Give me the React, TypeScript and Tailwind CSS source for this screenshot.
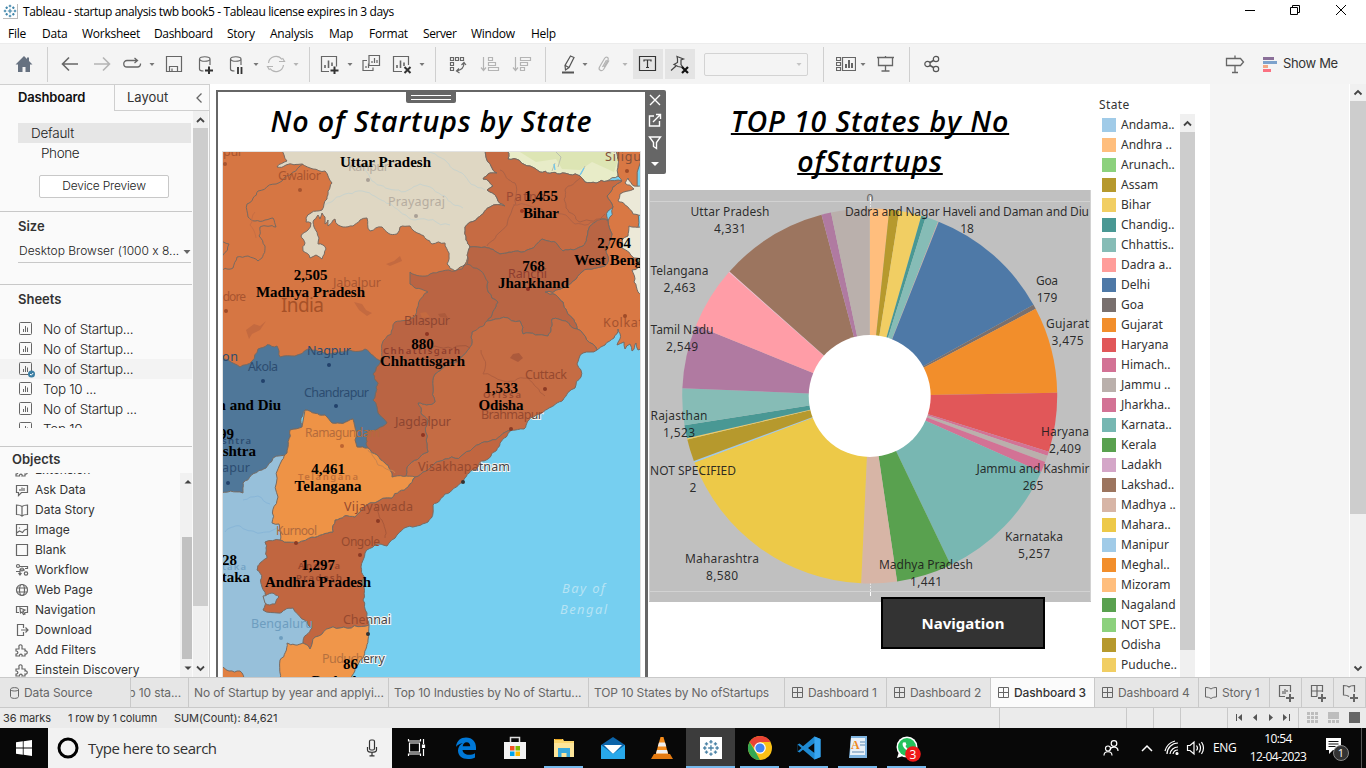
import React from "react";

type Pt = [number, number];
type Kids = { children?: React.ReactNode };

/* ---------- small helpers ---------- */

function Icon({ children, className = "", s = 20, c = "#666" }: Kids & { className?: string; s?: number; c?: string }) {
  return (
    <svg width={s} height={s} viewBox={`0 0 ${s} ${s}`} fill="none" stroke={c} strokeWidth={1.2} className={`shrink-0 ${className}`}>
      {children}
    </svg>
  );
}

const Caret = ({ className = "", c = "#777" }: { className?: string; c?: string }) => (
  <svg width="8" height="8" viewBox="0 0 8 8" className={`shrink-0 ${className}`}>
    <path d="M1.500 3h5L4 6z" fill={c} />
  </svg>
);

const Sep = ({ className = "" }: { className?: string }) => <div className={`h-[35px] w-px shrink-0 bg-[#cfcfcf] ${className}`} />;

/* Subdivides an edge with noise that depends only on its end points, so that neighbours share a border. */
function edge(a: Pt, b: Pt, depth: number): Pt[] {
  const len = Math.hypot(b[0] - a[0], b[1] - a[1]);
  if (depth === 0 || len < 4) return [b];
  const flip = a[0] + a[1] * 1.7 > b[0] + b[1] * 1.7 ? -1 : 1;
  const n = Math.sin((a[0] + b[0]) * 12.98 + (a[1] + b[1]) * 78.23) * 43758.5;
  const r = (n - Math.floor(n) - 0.5) * 0.3 * flip;
  const m: Pt = [(a[0] + b[0]) / 2 - (b[1] - a[1]) * r, (a[1] + b[1]) / 2 + (b[0] - a[0]) * r];
  return [...edge(a, m, depth - 1), ...edge(m, b, depth - 1)];
}

function rough(pts: Pt[], closed = true) {
  let out: Pt[] = [pts[0]];
  for (let i = 1; i < pts.length; i++) out = out.concat(edge(pts[i - 1], pts[i], 3));
  return "M" + out.map((p) => `${p[0].toFixed(1)} ${p[1].toFixed(1)}`).join("L") + (closed ? "Z" : "");
}

/* ---------- map data ---------- */

const UP: Pt[] = [[283, 148], [284, 155], [287, 161], [277, 167], [286, 165], [302, 164], [313, 169], [325, 171], [332, 183], [328, 191], [327, 199], [324, 204], [322, 210], [311, 213], [306, 218], [306, 222], [311, 223], [308, 230], [301, 236], [305, 243], [303, 251], [310, 258], [316, 255], [322, 259], [326, 249], [323, 245], [318, 244], [319, 238], [314, 227], [313, 222], [318, 215], [320, 219], [322, 213], [325, 217], [325, 224], [328, 220], [328, 226], [335, 219], [338, 225], [343, 227], [353, 226], [360, 220], [367, 218], [370, 231], [382, 227], [388, 233], [397, 234], [400, 227], [410, 226], [420, 234], [432, 244], [445, 243], [447, 264], [455, 271], [463, 266], [468, 256], [470, 247], [466, 240], [465, 227], [476, 220], [490, 207], [505, 206], [497, 198], [487, 190], [493, 186], [483, 179], [490, 173], [497, 173], [491, 166], [485, 148]];
const BIHAR: Pt[] = [[485, 148], [491, 166], [497, 173], [490, 173], [483, 179], [493, 186], [487, 190], [497, 198], [505, 206], [490, 207], [476, 220], [465, 227], [466, 240], [470, 247], [485, 247], [500, 254], [518, 251], [530, 249], [542, 239], [557, 244], [563, 251], [583, 246], [588, 231], [602, 219], [608, 221], [608, 211], [613, 207], [607, 196], [622, 181], [607, 181], [585, 182], [580, 176], [560, 174], [540, 172], [530, 166], [508, 159], [507, 148]];
const JHARKHAND: Pt[] = [[467, 264], [470, 247], [485, 247], [500, 254], [518, 251], [530, 249], [542, 239], [557, 244], [563, 251], [583, 246], [588, 231], [602, 219], [608, 221], [612, 234], [607, 264], [582, 272], [573, 281], [545, 292], [563, 302], [567, 312], [577, 329], [552, 319], [548, 336], [523, 334], [520, 321], [487, 321], [498, 302], [488, 292], [488, 282]];
const WB: Pt[] = [[615, 148], [618, 165], [618, 176], [622, 181], [607, 196], [613, 207], [608, 221], [612, 234], [607, 264], [582, 272], [573, 281], [545, 292], [563, 302], [567, 312], [577, 329], [597, 350], [605, 345], [614, 338], [618, 329], [620, 339], [617, 345], [624, 342], [625, 349], [630, 344], [632, 351], [636, 343], [638, 350], [645, 347], [645, 148]];
const CHHATTISGARH: Pt[] = [[410, 272], [430, 274], [455, 271], [467, 264], [488, 282], [488, 292], [498, 302], [487, 321], [472, 332], [467, 351], [445, 366], [435, 374], [433, 387], [435, 402], [418, 403], [428, 420], [428, 452], [407, 467], [405, 477], [392, 477], [385, 463], [368, 448], [368, 430], [387, 423], [373, 400], [378, 383], [373, 374], [381, 361], [382, 344], [395, 322], [415, 316], [428, 292], [410, 284]];
const ODISHA: Pt[] = [[487, 321], [520, 321], [523, 334], [548, 336], [552, 319], [577, 329], [597, 350], [583, 353], [577, 364], [581, 377], [575, 388], [563, 400], [549, 408], [535, 416], [524, 429], [511, 430], [490, 441], [470, 451], [445, 459], [435, 463], [415, 477], [405, 477], [407, 467], [428, 452], [428, 420], [418, 403], [435, 402], [433, 387], [435, 374], [445, 366], [467, 351], [472, 332]];
const ANDHRA: Pt[] = [[415, 477], [435, 463], [445, 459], [470, 451], [490, 441], [511, 430], [500, 443], [491, 456], [475, 470], [463, 482], [445, 494], [433, 505], [433, 513], [428, 522], [407, 527], [397, 535], [387, 546], [375, 545], [365, 553], [361, 567], [364, 587], [363, 600], [367, 613], [369, 625], [340, 628], [315, 637], [310, 649], [303, 643], [312, 628], [293, 608], [278, 613], [263, 610], [262, 587], [257, 570], [267, 558], [265, 542], [280, 540], [298, 543], [312, 537], [333, 532], [335, 520], [355, 517], [360, 512], [392, 498], [408, 487]];
const TELANGANA: Pt[] = [[305, 410], [325, 415], [332, 423], [353, 419], [357, 447], [368, 448], [385, 463], [392, 477], [415, 477], [408, 487], [392, 498], [360, 512], [355, 517], [335, 520], [333, 532], [312, 537], [298, 543], [280, 540], [279, 524], [272, 523], [278, 497], [282, 460], [287, 453], [290, 430], [302, 427]];
const MAHARASHTRA: Pt[] = [[218, 357], [228, 360], [240, 367], [252, 361], [258, 349], [277, 346], [280, 357], [308, 349], [340, 352], [365, 349], [381, 361], [373, 374], [378, 383], [373, 400], [387, 423], [368, 430], [368, 448], [357, 447], [353, 419], [332, 423], [325, 415], [305, 410], [302, 427], [290, 430], [287, 453], [273, 458], [262, 470], [243, 483], [243, 493], [218, 492]];
const KARNATAKA: Pt[] = [[218, 492], [243, 493], [243, 483], [262, 470], [273, 458], [287, 453], [282, 460], [278, 497], [272, 523], [279, 524], [280, 540], [320, 560], [320, 640], [290, 690], [218, 690]];
const TAMIL: Pt[] = [[286, 690], [280, 660], [287, 643], [303, 643], [310, 649], [315, 637], [340, 628], [369, 625], [368, 640], [363, 658], [355, 668], [352, 690]];
const LAND: Pt[] = [[218, 148], [500, 148], [500, 300], [420, 370], [218, 370]];
const NEPAL: Pt[] = [[507, 148], [508, 159], [530, 166], [540, 172], [560, 174], [580, 176], [585, 182], [607, 181], [618, 176], [618, 165], [615, 148]];
const BDESH1: Pt[] = [[645, 186], [634, 186], [628, 178], [625, 183], [634, 189], [620, 194], [618, 201], [625, 205], [633, 214], [645, 215]];
const BDESH2: Pt[] = [[645, 225], [629, 226], [628, 236], [622, 240], [622, 248], [634, 258], [645, 262], [645, 296], [638, 292], [634, 282], [632, 270], [645, 262]];

const REGIONS: [Pt[], string][] = [
  [LAND, "#d67643"], [KARNATAKA, "#97c0da"], [WB, "#d97844"], [NEPAL, "#e8ecc8"], [UP, "#dfd7c3"], [BIHAR, "#c66b43"], [JHARKHAND, "#b96544"], [ODISHA, "#c56c44"],
  [CHHATTISGARH, "#ba6443"], [MAHARASHTRA, "#4f7799"], [ANDHRA, "#c16640"], [TELANGANA, "#ee9346"], [TAMIL, "#f0964a"], [BDESH1, "#ece9d8"], [BDESH2, "#ece9d8"],
];

const TERRAIN: [Pt[], string][] = [
  [[[343, 160], [365, 168], [372, 181], [395, 190], [420, 184], [445, 196], [463, 208]], "#c9d3cd"],
  [[[325, 205], [345, 194], [372, 195], [392, 205], [415, 220], [450, 225]], "#c9d3cd"],
  [[[425, 150], [445, 160], [462, 173], [485, 190]], "#c9d3cd"],
  [[[500, 170], [515, 183], [512, 210], [500, 232], [487, 246]], "#aa6146"],
  [[[580, 178], [565, 190], [566, 208], [580, 222], [605, 214]], "#aa6146"],
  [[[513, 205], [545, 212], [575, 224], [600, 219]], "#b06347"],
  [[[412, 345], [435, 346], [470, 348]], "#a4573c"],
  [[[481, 350], [483, 374], [500, 380], [528, 378], [545, 396]], "#b05f40"],
  [[[368, 450], [378, 465], [395, 473]], "#ca8550"],
  [[[375, 505], [382, 520], [385, 538]], "#a8583a"],
  [[[225, 532], [240, 526], [255, 532], [277, 528]], "#88b6d8"],
  [[[243, 500], [258, 496], [270, 504]], "#88b6d8"],
  [[[255, 212], [250, 225], [256, 238]], "#c76e44"],
];

function CityLabel({ x, y, w, t, c, s = 12.5, ls }: { x: number; y: number; w: number; t: string; c: string; s?: number; ls?: boolean }) {
  return (
    <text x={x} y={y} textLength={w} fill={c} fontSize={s} fontFamily="'Noto Sans', sans-serif" fontWeight={ls ? 600 : 400} fontStyle={t === "Bay of" || t === "Bengal" ? "italic" : undefined}>
      {t}
    </text>
  );
}

const CITIES: [number, number, number, string, string, number?][] = [
  [223, 156, 20, "pur", "#a8542f"], [278, 180, 43, "Gwalior", "#a8542f"], [348, 171, 41, "Kanpur", "#b6ada0"], [388, 206, 57, "Prayagraj", "#b6ada0"],
  [333, 287, 48, "Jabalpur", "#aa5833"], [281, 312, 43, "India", "#a65128", 19], [213, 301, 33, "Indore", "#a8542f", 12], [506, 201, 39, "Patna", "#9a4a35"],
  [605, 161, 36, "Siligu", "#83503a"], [508, 278, 39, "Ranchi", "#8e3d30"], [603, 327, 40, "Kolkat", "#a4522f"], [404, 325, 46, "Bilaspur", "#8d4632"],
  [307, 355, 44, "Nagpur", "#2c4c70"], [248, 371, 30, "Akola", "#2c4c70"], [222, 361, 16, "on", "#2c4c70"], [525, 379, 42, "Cuttack", "#96492f"],
  [304, 397, 65, "Chandrapur", "#2c4c70"], [395, 426, 56, "Jagdalpur", "#8d4632"], [305, 437, 75, "Ramagundam", "#b46b3c", 12], [222, 472, 28, "apur", "#2c4c70"],
  [344, 511, 69, "Vijayawada", "#954a2f"], [276, 535, 41, "Kurnool", "#b06a3e", 12], [341, 546, 39, "Ongole", "#954a2f", 12], [251, 628, 62, "Bengaluru", "#6d9dbf"],
];

const DOTS: [number, number, string][] = [
  [225, 164, "#a8542f"], [300, 190, "#a8542f"], [368, 180, "#a9a096"], [416, 216, "#a9a096"], [226, 311, "#a04b28"], [522, 211, "#a33a20"], [627, 171, "#a04b28"],
  [528, 289, "#8e3022"], [625, 316, "#a04b28"], [427, 334, "#8e3522"], [329, 365, "#22426c"], [263, 381, "#22426c"], [545, 389, "#8c3a24"], [336, 406, "#22426c"],
  [423, 435, "#8e3522"], [342, 446, "#bd6431"], [228, 483, "#22426c"], [378, 521, "#8c3a24"], [296, 543, "#8c3a24"], [360, 555, "#8c3a24"], [281, 638, "#6d9dbf"],
  [368, 634, "#333"], [463, 482, "#333"], [511, 429, "#8c3a24"],
];

const STATES: [number, number, string, string, number][] = [
  [385.500, 167, "", "Uttar Pradesh", 91], [541, 218, "1,455", "Bihar", 36], [614, 265, "2,764", "West Bengal", 80], [310.500, 297, "2,505", "Madhya Pradesh", 109],
  [533.500, 288, "768", "Jharkhand", 71], [422.500, 366, "880", "Chhattisgarh", 85], [501, 410, "1,533", "Odisha", 45], [328, 491, "4,461", "Telangana", 67],
  [318, 587, "1,297", "Andhra Pradesh", 106],
];

const COAST_TOWNS: [number, number, number, string][] = [[418, 471, 92, "Visakhapatnam"], [481, 419, 62, "Brahmapur"], [343, 624, 48, "Chennai"], [322, 663, 63, "Puducherry"]];

function MapView() {
  const serif = "'Liberation Serif', serif";
  return (
    <svg width="417" height="525" viewBox="223 152 417 525" className="block">
      <rect x="218" y="148" width="430" height="540" fill="#76cff0" />
      <g stroke="#f4f4f4" strokeWidth="2" paintOrder="stroke" fill="#444" fontSize="12.5" fontFamily="'Noto Sans', sans-serif">
        {COAST_TOWNS.map(([x, y, w, t]) => <text key={t} x={x} y={y} textLength={w}>{t}</text>)}
      </g>
      {REGIONS.map(([p, f], i) => (
        <path key={i} d={rough(p)} fill={f} stroke={i < 2 ? "none" : "#776a62"} strokeWidth="1" strokeLinejoin="round" />
      ))}
      <path d="M520 152l16 10 20-3 6 10 18 1 12-8 22 10 4-12-6-8z" fill="#dde5b4" />
      <path d="M556 152l5 5-3 10M555 163l-3 8M585 166l-4 8" stroke="#b9bfae" fill="none" />
      <path d="M584 168l-4 7M554 164l1 6" stroke="#6fc8f0" strokeWidth="1.3" fill="none" />
      <path d={rough([[303, 164], [282, 181], [258, 191], [247, 204], [248, 217], [255, 221], [265, 220], [273, 218], [276, 227], [260, 227], [259, 236], [265, 246], [258, 261], [248, 256], [237, 257], [233, 268], [218, 272]], false)} fill="none" stroke="#776a62" />
      <path d={rough([[218, 243], [229, 244], [223, 255], [218, 262]], false)} fill="none" stroke="#776a62" />
      <path d={rough([[263, 596], [272, 593], [279, 597], [275, 604], [265, 603]])} fill="#97c0da" stroke="#776a62" />
      <path d={rough([[218, 667], [229, 671], [240, 671], [250, 690], [218, 690]])} fill="#e08042" stroke="#776a62" />
      {TERRAIN.map(([p, c], i) => (
        <path key={i} d={rough(p, false)} fill="none" stroke={c} />
      ))}
      <path d="M246 330l8-6 6 2 6-5-6 9-8 4-3 5-2-6zM386 264l8-3 6-5 2 5-12 5zM354 302l8 2 4 6 6 3-5 3-8-6zM420 313l6-1 4 5-8 1z" fill="#c46a40" />
      <path d="M513 354l6-1 4 5-5 4-8-4zM438 314l7-1 3 5-8-1z" fill="#ac5a3c" />
      {CITIES.map(([x, y, w, t, c, s], i) => (
        <CityLabel key={i} x={x} y={y} w={w} t={t} c={c} s={s} />
      ))}
      <clipPath id="onland">
        <path d={rough(ODISHA) + rough(ANDHRA) + rough(TAMIL)} />
      </clipPath>
      <g clipPath="url(#onland)" fill="#96492f" fontSize="12.5" fontFamily="'Noto Sans', sans-serif">
        {COAST_TOWNS.map(([x, y, w, t]) => <text key={t} x={x} y={y} textLength={w} fill={t === "Puducherry" ? "#b5713f" : undefined}>{t}</text>)}
      </g>
      <CityLabel ls x={383} y={354} w={77} t="Chhattisgarh" c="#8f3f2f" s={9.5} />
      <CityLabel ls x={483} y={398} w={38} t="Orissa" c="#9b4a31" s={9.5} />
      <CityLabel ls x={298} y={480} w={60} t="Telangana" c="#c3713a" s={9.5} />
      <CityLabel ls x={298} y={569} w={42} t="Andhra" c="#94452c" s={9.5} />
      <CityLabel ls x={296} y={581} w={46} t="Pradesh" c="#94452c" s={9.5} />
      <CityLabel ls x={222} y={444} w={29} t="shtra" c="#2c4c70" s={9.5} />
      <CityLabel ls x={222} y={570} w={24} t="taka" c="#73a3c5" s={9.5} />
      <CityLabel x={562} y={593} w={43} t="Bay of" c="#b5e3f4" s={13} />
      <CityLabel x={560} y={614} w={47} t="Bengal" c="#b5e3f4" s={13} />
      {DOTS.map(([x, y, c], i) => (
        <circle key={i} cx={x} cy={y} r="2" fill={c} />
      ))}
      <g fontFamily={serif} fontWeight="700" fontSize="15" textAnchor="middle" fill="#000">
        {STATES.map(([x, y, n, name, w]) => (
          <g key={name}>
            {n && <text x={x} y={y - 17}>{n}</text>}
            <text x={x} y={y} textLength={w}>{name}</text>
          </g>
        ))}
        <text x="350.500" y="669">86</text>
        <text x="350" y="686">Puducherry</text>
      </g>
      <g fontFamily={serif} fontWeight="700" fontSize="15" textAnchor="end" fill="#000">
        <text x="281" y="410">Daman and Diu</text>
        <text x="234" y="439">4,799</text>
        <text x="256" y="456">Maharashtra</text>
        <text x="237" y="565">4,228</text>
        <text x="250" y="582">Karnataka</text>
      </g>
    </svg>
  );
}

/* ---------- pie ---------- */

const SLICES: [number, string][] = [
  [6, "#ffbe7d"], [9.1, "#b6992d"], [16, "#f1ce63"], [17.4, "#499894"], [21.4, "#86bcb6"], [21.6, "#d9a9a2"], [60.9, "#4e79a7"], [62.3, "#79706e"], [89, "#f28e2b"],
  [107.3, "#e15759"], [108.6, "#d37295"], [110.6, "#bab0ac"], [113.9, "#d37295"], [154.4, "#78b7b2"], [171.6, "#59a14f"], [182.6, "#d7b5a6"], [249.2, "#edc948"],
  [249.7, "#a0cbe8"], [256.6, "#b6992d"], [257, "#f1ce63"], [261, "#499894"], [272.4, "#86bcb6"], [292.1, "#b07aa1"], [311.3, "#ff9da7"], [311.6, "#fabfd2"],
  [345.1, "#9c755f"], [348.1, "#b07aa1"], [360, "#bab0ac"],
];

const PIE_LABELS: [number, number, number, string, string][] = [
  [730, 216, 79, "Uttar Pradesh", "4,331"], [967, 216, 244, "Dadra and Nagar Haveli and Daman and Diu", "18"], [679.5, 275, 58, "Telangana", "2,463"],
  [682, 334, 63, "Tamil Nadu", "2,549"], [1047, 285, 22, "Goa", "179"], [1067.5, 328, 43, "Gujarat", "3,475"], [679, 420, 57, "Rajasthan", "1,523"],
  [1065, 436, 48, "Haryana", "2,409"], [693, 475, 86, "NOT SPECIFIED", "2"], [1033, 473, 113, "Jammu and Kashmir", "265"], [722, 563, 74, "Maharashtra", "8,580"],
  [926, 569, 94, "Madhya Pradesh", "1,441"], [1034, 541, 58, "Karnataka", "5,257"],
];

function Pie() {
  const cx = 869.7, cy = 396, R = 187.5;
  const at = (d: number) => `${(cx + R * Math.sin((d * Math.PI) / 180)).toFixed(2)} ${(cy - R * Math.cos((d * Math.PI) / 180)).toFixed(2)}`;
  return (
    <svg width="442" height="412" viewBox="649 190 442 412" className="block">
      <rect x="649" y="190" width="442" height="412" fill="#c0c0c0" />
      <path d="M649.5 190v411M1090.5 190v411M649 201.5h442M649 591.5h442" stroke="#d2d2d2" fill="none" />
      <text x="870" y="203" textAnchor="middle" fontSize="12" fill="#666" fontFamily="'Noto Sans', sans-serif">0</text>
      <rect x="860" y="201" width="20" height="7" fill="#c0c0c0" />
      <path d="M860 201.5h20" stroke="#d2d2d2" />
      <path d="M870.5 197v4M870.5 592v4" stroke="#fff" />
      <path d="M870.5 202v8M870.5 583v8" stroke="#e4e4e4" strokeDasharray="2 1" />
      {SLICES.map(([end, f], i) => {
        const start = i ? SLICES[i - 1][0] : 0;
        return <path key={i} d={`M${cx} ${cy}L${at(start)}A${R} ${R} 0 0 1 ${at(end)}Z`} fill={f} />;
      })}
      <circle cx={cx} cy={cy} r="61" fill="#fff" />
      <g fontFamily="'Noto Sans', sans-serif" fontSize="12" textAnchor="middle" fill="#1c1c1c" fillOpacity="0.92">
        {PIE_LABELS.map(([x, y, w, name, n]) => (
          <g key={name}>
            <text x={x} y={y} textLength={w}>{name}</text>
            <text x={x} y={y + 17} textLength={n.length === 5 ? 32 : undefined}>{n}</text>
          </g>
        ))}
      </g>
    </svg>
  );
}

const LEGEND: [string, string][] = [
  ["#a0cbe8", "Andama.."], ["#ffbe7d", "Andhra .."], ["#8cd17d", "Arunach.."], ["#b6992d", "Assam"], ["#f1ce63", "Bihar"], ["#499894", "Chandig.."], ["#86bcb6", "Chhattis.."],
  ["#ff9d9a", "Dadra a.."], ["#4e79a7", "Delhi"], ["#79706e", "Goa"], ["#f28e2b", "Gujarat"], ["#e15759", "Haryana"], ["#d37295", "Himach.."], ["#bab0ac", "Jammu .."],
  ["#d37295", "Jharkha.."], ["#76b7b2", "Karnata.."], ["#59a14f", "Kerala"], ["#d4a6c8", "Ladakh"], ["#9c755f", "Lakshad.."], ["#d7b5a6", "Madhya .."], ["#edc948", "Mahara.."],
  ["#a0cbe8", "Manipur"], ["#f28e2b", "Meghal.."], ["#ffbe7d", "Mizoram"], ["#59a14f", "Nagaland"], ["#8cd17d", "NOT SPE.."], ["#b6992d", "Odisha"], ["#f1ce63", "Puduche.."],
];

/* ---------- chrome ---------- */

const SEGOE = "font-['Open_Sans',sans-serif]";

function TableauMark({ s = 16 }: { s?: number }) {
  return (
    <svg width={s} height={s} viewBox="0 0 16 16" fill="none" stroke="#3c83a8" strokeWidth="1.3" className="shrink-0">
      <path d="M8 5.5v5M5.5 8h5M8 .8v3M6.5 2.3h3M8 12.200v3M6.500 13.700h3M.8 8h3M2.300 6.500v3M12.200 8h3M13.700 6.500v3M4.200 2.800v3M2.700 4.300h3M11.800 2.800v3M10.300 4.300h3M4.200 10.200v3M2.700 11.700h3M11.800 10.200v3M10.300 11.700h3" />
    </svg>
  );
}

function TitleBar() {
  return (
    <div className="flex h-[23px] items-center bg-white">
      <div className="ml-[3px] flex h-[15px] w-[15px] items-center justify-center border-r border-b border-[#bbb]"><TableauMark s={14} /></div>
      <span className={`ml-[5px] grow pt-px text-[12px] tracking-[-0.36px] whitespace-nowrap text-black ${SEGOE}`}>Tableau - startup analysis twb book5 - Tableau license expires in 3 days</span>
      <svg width="110" height="16" viewBox="0 0 110 16" fill="none" stroke="#000" strokeWidth="1" className="mr-[16px] mb-[3px]">
        <path d="M5 8.500h10M50.500 5.500h7v7h-7zM52.500 5.500v-2h7v7h-2M96 3l10 10M106 3L96 13" />
      </svg>
    </div>
  );
}

function MenuBar() {
  return (
    <div className={`flex h-[20px] items-center bg-white pt-[2px] pl-[8px] text-[12px] tracking-[-0.25px] text-black ${SEGOE}`}>
      <span className="w-[34px]">File</span>
      <span className="w-[40px]">Data</span>
      <span className="w-[72px]">Worksheet</span>
      <span className="w-[73px] tracking-[-0.35px]">Dashboard</span>
      <span className="w-[43px]">Story</span>
      <span className="w-[59px]">Analysis</span>
      <span className="w-[40px]">Map</span>
      <span className="w-[54px]">Format</span>
      <span className="w-[48px] tracking-[-0.4px]">Server</span>
      <span className="w-[60px]">Window</span>
      <span>Help</span>
    </div>
  );
}

function Toolbar() {
  const g = "#b4b4b4";
  return (
    <div className="flex h-[41px] items-center border-t border-[#ececec] bg-[#f4f4f4]">
      <Icon className="ml-[14px]" c="none"><path d="M10 2L1.500 10.500H4V18h4.500v-5h3v5H16v-7.500h2.500L15 7V3.500h-2V5z" fill="#667180" /></Icon>
      <Sep className="ml-[13px]" />
      <Icon className="ml-[12px]"><path d="M18 10H3M9 3.500L2.500 10 9 16.500" strokeWidth="1.6" /></Icon>
      <Icon className="ml-[12px]" c={g}><path d="M2 10h15M11 3.500l6.500 6.500-6.500 6.500" strokeWidth="1.6" /></Icon>
      <Icon className="ml-[10px]"><path d="M15 6.500H5a3 3 0 0 0 0 6.500h10.500a3 3 0 0 0 3-3.500M12.500 4l3 2.500-3 2.500" strokeWidth="1.300" /></Icon>
      <Caret className="ml-[6px]" />
      <Icon className="ml-[8px]"><path d="M2.500 2.500h15v15h-15zM5.500 17.500v-5h8v5M8 14.500v3" /></Icon>
      <Icon className="ml-[12px]"><path d="M3.500 5v10c0 1 1 2 4 2M14 5v6M3.500 5c0-3 10.500-3 10.500 0s-10.500 3-10.500 0" /><path d="M13 12.500v8M9 16.500h8" stroke="#333" strokeWidth="2" /></Icon>
      <Icon className="ml-[10px]"><path d="M4.500 5v10c0 1 1 2 4 2M15 5v6M4.500 5c0-3 10.500-3 10.500 0s-10.500 3-10.500 0" /><path d="M12 13v7M15.500 13v7" stroke="#333" strokeWidth="1.800" /></Icon>
      <Caret className="ml-[6px]" />
      <Icon className="ml-[6px]" c={g}><path d="M2.500 9A7.500 7.500 0 0 1 16 5.500M17.500 11A7.500 7.500 0 0 1 4 14.500M13 7.500h5.500L16.500 4M7 12.500H1.500L3.500 16" /></Icon>
      <Caret className="ml-[6px]" c={g} />
      <Sep className="ml-[9px]" />
      <Icon className="ml-[10px]"><path d="M9 17.500H1.500v-15h15v10" /><path d="M5 14v-3M8.500 14V6.500M12 12V8.500" strokeWidth="1.600" /><path d="M14.500 12.500v8M10.500 16.500h8" stroke="#333" strokeWidth="2" /></Icon>
      <Caret className="ml-[6px]" />
      <Icon className="ml-[7px]"><path d="M8 1.500h10.500v10H8zM6 6.500H2v10h10v-3M11 9V7M13.500 9V4M16 9V6M5 14v-2M7.500 14V9.500" /></Icon>
      <Icon className="ml-[11px]"><path d="M10 17.500H1.500v-15h15V11" /><path d="M5 14v-3M8.500 14V6.500M12 12V8.500" strokeWidth="1.600" /><path d="M12.500 13l6 6M18.500 13l-6 6" stroke="#333" strokeWidth="2" /></Icon>
      <Caret className="ml-[6px]" />
      <Sep className="ml-[9px]" />
      <Icon className="ml-[11px]"><path d="M3.500 3.500h3v3h-3zM8.500 3.500h3v3h-3zM13.500 3.500h3v3h-3zM3.500 8.500h3v3h-3zM3.500 13.500h3v3h-3zM17 9c0 4-3 7-7 8M14.500 11L17 8.500 19 11M12 14.500L9.500 17l3 2" /></Icon>
      <Icon className="ml-[13px]" c={g}><path d="M3.500 3v13M1 13.500l2.500 3 2.500-3M8.500 3.500h4v3h-4zM8.500 8.500h7v3h-7zM8.500 13.500h10v3h-10z" /></Icon>
      <Icon className="ml-[12px]" c={g}><path d="M3.500 3v13M1 13.500l2.500 3 2.500-3M8.500 3.500h10v3h-10zM8.500 8.500h7v3h-7zM8.500 13.500h4v3h-4z" /></Icon>
      <Sep className="ml-[13px]" />
      <Icon className="ml-[12px]" c="#555"><path d="M12.500 2l3.500 1.500-5 10-3.500 2.500-.5-4.500zM7.300 11.500l3.500 2" /><path d="M4 18.500h12" strokeWidth="2" /></Icon>
      <Caret className="ml-[3px]" />
      <Icon className="ml-[6px]" c={g}><path d="M9 13l4-7c1-3-2-4-3.500-1.500l-5 8.500c-1.500 3 2 5 4 2.500L14 6.500M7.500 13l4-7" /></Icon>
      <Caret className="ml-[6px]" c={g} />
      <div className="ml-[4px] flex h-[30px] w-[30px] items-center justify-center bg-[#e4e4e4]">
        <Icon c="#333"><path d="M1.500 2.500h16v14h-16zM6 7.500V6h7v1.500M9.500 6v7.500M8 13.500h3" /></Icon>
      </div>
      <div className="ml-[2px] flex h-[30px] w-[30px] items-center justify-center bg-[#e4e4e4]">
        <Icon c="#444"><path d="M7 2.500l6.500 2.500-2.500 1v4.500l2 3-5-1-4-2L7.500 8.500V5zM6 12l-5 4.500" /><path d="M12 13l6 6M18 13l-6 6" stroke="#111" strokeWidth="2.200" /></Icon>
      </div>
      <div className="ml-[9px] flex h-[23px] w-[104px] items-center justify-end rounded-[2px] border border-[#d3d3d3] pr-[4px]"><Caret c="#c4c4c4" /></div>
      <Sep className="ml-[15px]" />
      <Icon className="ml-[12px]"><path d="M.5 3.500h4v3h-4zM.5 8.500h4v3h-4zM.5 13.500h4v3h-4zM6.500 3.500h13v13h-13z" /><path d="M10 14v-4M13 14V6M16 14V9" strokeWidth="2" /></Icon>
      <Caret className="ml-[3px]" />
      <Icon className="ml-[8px]"><path d="M2 3.500h17M3.500 3.500v8h14v-8M10.500 11.500v5M6.500 17h8M10.500 2v1.500" strokeWidth="1.300" /></Icon>
      <Sep className="ml-[14px]" />
      <Icon className="ml-[12px]" c="#555"><circle cx="5.500" cy="10" r="2.700" /><circle cx="14" cy="5" r="2.700" /><circle cx="14" cy="15" r="2.700" /><path d="M8 8.500l3.500-2M8 11.500l3.500 2" strokeWidth="1.500" /></Icon>
      <Icon className="ml-[283px]"><path d="M1.500 4.500h14l3 3.500-3 3.500h-14zM10 1.500v3M10 11.500V18M7 18.500h6" strokeWidth="1.300" /></Icon>
      <svg width="14" height="16" viewBox="0 0 14 16" className="ml-[18px] shrink-0">
        <path d="M0 1h11v3H0z" fill="#8a6f98" /><path d="M0 5h14v3H0z" fill="#7ca2cc" /><path d="M0 9h5v3H0z" fill="#f4a884" /><path d="M0 13h8v3H0z" fill="#fb7181" />
      </svg>
      <span className="ml-[6px] font-['Inter',sans-serif] text-[13px] tracking-[-0.35px] text-[#333]">Show Me</span>
    </div>
  );
}

function SheetRow({ t, active, clip }: { t: string; active?: boolean; clip?: boolean }) {
  return (
    <div className={`flex shrink-0 pl-[18px] ${clip ? "h-[9px] overflow-hidden" : "h-5"} ${active ? "bg-[#f3f3f3]" : ""}`}>
      <div className="mt-[3px] h-[14px] w-[16px] shrink-0">
        <svg width="17" height="18" viewBox="0 0 17 18" fill="none" stroke="#666" className="overflow-visible">
          <rect x="1.500" y=".5" width="12" height="12" rx="1" />
          <path d="M5.500 10V7M7.500 10V4M9.500 10V5.500" />
          {active && (<><circle cx="13.500" cy="12" r="3.500" fill="#3b7ea3" stroke="none" /><path d="M12 12l1.200 1.200L15.200 11" stroke="#fff" /></>)}
        </svg>
      </div>
      <span className="ml-[9px] text-[13.5px] leading-5 font-light tracking-[-0.3px] whitespace-nowrap text-[#222]">{t}</span>
    </div>
  );
}

const puzzle = <path d="M1 6h3V4c-1-3 4-3 3 0v2h3v2c3-1 3 4 0 3v2H7c1-2.500-3-2.500-2.500 0H1v-2c2.500 0 2.500-3 0-3z" />;
const OBJECTS: [string, React.ReactNode][] = [
  ["Extension", puzzle],
  ["Ask Data", <path d="M1.500 2.500h11v7h-6l-3 3v-3h-2zM5 8V6M7 8V4.500M9 8V5" />],
  ["Data Story", <path d="M7 3.500C5 2 3 2 1.500 2v9.500c2 0 4 0 5.500 1.500 1.500-1.500 3.500-1.500 5.500-1.500V2C11 2 9 2 7 3.500zM7 3.500V13" />],
  ["Image", <path d="M1.500 1.500h11v11h-11zM1.500 10l3-2 3 1.500 2-2.500 3-1M4.500 4.500v1" />],
  ["Blank", <path d="M1.500 1.500h11v11h-11z" />],
  ["Workflow", <><circle cx="3" cy="3" r="1.500" /><path d="M5 3.500h7.500v2H10M4 7h6M1 8.500h4v3M3.500 10l1.500 2 1.500-2" /><circle cx="7" cy="6.500" r="1.500" /><circle cx="11" cy="10.500" r="1.700" /></>],
  ["Web Page", <><circle cx="7" cy="7" r="5.500" /><ellipse cx="7" cy="7" rx="2.500" ry="5.500" /><path d="M1.500 5h11M1.500 9h11" /></>],
  ["Navigation", <path d="M4 9.500H1.500v-6h11v6H10M5 5l5 2-2 1 2 3-1.500.5L7 9l-1.500 1z" />],
  ["Download", <path d="M8.500 5V1.500h-6v11h6V9M6 7h7M10.500 4.500L13 7l-2.500 2.500" />],
  ["Add Filters", puzzle],
  ["Einstein Discovery", puzzle],
];

function SidePanel() {
  return (
    <aside className="flex w-[210px] shrink-0 flex-col border-t border-r border-[#cfcfcf] bg-[#fafafa] font-['Inter',sans-serif] [font-feature-settings:'calt'_0]">
      <div className="flex h-[26px] shrink-0">
        <div className="flex w-[114px] items-center pl-[18px] text-[13px] font-semibold tracking-[-0.15px] text-[#111]">Dashboard</div>
        <div className="flex grow items-center border-b border-l border-[#cfcfcf] pl-[12px] text-[13px] text-[#333]">
          Layout
          <svg width="8" height="12" viewBox="0 0 8 12" className="ml-auto mr-[6px]" fill="none" stroke="#666" strokeWidth="1.300"><path d="M6.500 1.500L2 6l4.500 4.500" /></svg>
        </div>
      </div>
      <div className="flex min-h-0 grow">
        <div className="flex w-[192px] flex-col">
          <div className="mt-[12px] ml-[18px] h-5 w-[173px] shrink-0 bg-[#e6e6e6] pl-[13px] text-[13.5px] leading-5 font-light tracking-[-0.25px] text-[#222]">Default</div>
          <div className="ml-[41px] h-5 shrink-0 text-[13.5px] leading-5 font-light tracking-[-0.4px] text-[#222]">Phone</div>
          <div className="mt-[12px] ml-[39px] flex h-[23px] w-[130px] shrink-0 items-center justify-center rounded-[2px] border border-[#c8c8c8] bg-white pb-px text-[12px] font-light tracking-[-0.2px] text-[#222]">Device Preview</div>
          <div className="mt-[13px] h-px shrink-0 bg-[#c8c8c8]" />
          <div className="mt-[4px] ml-[18px] h-5 shrink-0 text-[13px] leading-5 font-semibold text-[#333]">Size</div>
          <div className="mt-[5px] ml-[18px] flex h-[22px] w-[173px] shrink-0 items-center border-b border-[#c8c8c8] pl-px text-[12px] font-light tracking-[0px] whitespace-nowrap text-[#222]">
            <span className="grow pb-px">Desktop Browser (1000 x 8...</span>
            <svg width="8" height="6" viewBox="0 0 8 6"><path d="M.5 1h7L4 5z" fill="#666" /></svg>
          </div>
          <div className="mt-[21px] h-px shrink-0 bg-[#c8c8c8]" />
          <div className="mt-[4px] ml-[18px] h-5 shrink-0 text-[13px] leading-5 font-semibold text-[#333]">Sheets</div>
          <div className="mt-[10px] flex shrink-0 flex-col">
            <SheetRow t="No of Startup..." />
            <SheetRow t="No of Startup..." />
            <SheetRow t="No of Startup..." active />
            <SheetRow t="Top 10 ..." />
            <SheetRow t="No of Startup ..." />
            <SheetRow t="Top 10" clip />
          </div>
          <div className="mt-[18px] h-px shrink-0 bg-[#c8c8c8]" />
          <div className="mt-[2px] ml-[12px] h-5 shrink-0 text-[13px] leading-5 font-semibold text-[#333]">Objects</div>
          <div className="mt-[4px] flex min-h-0 grow overflow-hidden">
            <div className="mt-[-13px] flex grow flex-col">
              {OBJECTS.map(([t, icon]) => (
                <div key={t} className="flex h-5 shrink-0 items-center pl-[15px] text-[12px] whitespace-nowrap text-[#333]">
                  <Icon s={14} className="mr-[6px]">{icon}</Icon>
                  {t}
                </div>
              ))}
            </div>
            <div className="flex w-[12px] flex-col items-center justify-between bg-[#f1f1f1] pt-[6px] pb-[6px]">
              <svg width="8" height="5" viewBox="0 0 8 5" className="ml-[4px]"><path d="M.5 4.500L4 1l3.500 3.500z" fill="#444" /></svg>
              <div className="mt-[53px] mb-[7px] ml-[2px] w-[10px] grow bg-[#c1c1c1]" />
              <svg width="8" height="5" viewBox="0 0 8 5" className="ml-[4px]"><path d="M.5.500h7L4 4z" fill="#444" /></svg>
            </div>
          </div>
        </div>
        <div className="ml-px flex w-[15px] flex-col items-center bg-[#f0f0f0]">
          <svg width="15" height="17" viewBox="0 0 15 17" fill="none" stroke="#444" strokeWidth="1.800"><path d="M4 11l3.500-3.500L11 11" /></svg>
          <div className="h-[478px] w-full bg-[#cdcdcd]" />
          <svg width="15" height="17" viewBox="0 0 15 17" fill="none" stroke="#444" strokeWidth="1.800" className="mt-auto"><path d="M4 6.500L7.500 10 11 6.500" /></svg>
        </div>
      </div>
    </aside>
  );
}

function Dashboard() {
  const title = "font-['Open_Sans',sans-serif] text-[28.5px] font-semibold italic leading-[40px] tracking-[0.9px] text-black";
  return (
    <main className="relative flex w-[1000px] shrink-0 overflow-hidden bg-white">
      <section className="relative mt-[6px] ml-[6px] flex w-[432px] shrink-0 flex-col border-t-2 border-r-[3px] border-l-2 border-[#666]">
        <h2 className={`mt-[9px] text-center whitespace-nowrap ${title}`}>No of Startups by State</h2>
        <div className="mt-[10px] ml-[4px] h-[526px] w-[419px] border-t border-r border-l border-[#e2e2e2]"><MapView /></div>
        <div className="absolute top-[-1px] left-[188px] flex h-[12px] w-[50px] flex-col items-center justify-center gap-[3px] rounded-b-[2px] bg-[#666]">
          <div className="h-px w-[40px] bg-white" />
          <div className="h-px w-[40px] bg-white" />
        </div>
      </section>
      <section className="mt-[17px] ml-px flex w-[442px] shrink-0 flex-col">
        <h2 className={`px-[50px] text-center whitespace-nowrap underline decoration-2 underline-offset-[1px] [text-decoration-skip-ink:none] ${title}`}>TOP 10 States by No<br />ofStartups</h2>
        <div className="mt-[9px]"><Pie /></div>
      </section>
      <section className="mt-[12px] ml-[8px] flex w-[97px] shrink-0 flex-col font-['Noto_Sans',sans-serif] text-[12px] text-[#333]">
        <div className="h-[18px] leading-[18px] tracking-[0.4px]">State</div>
        <div className="flex h-[563px]">
          <div className="flex w-[81px] flex-col overflow-hidden pt-px">
            {LEGEND.map(([c, t]) => (
              <div key={t} className="flex h-5 shrink-0 items-center">
                <div className="ml-[3px] h-[14px] w-[14px] shrink-0" style={{ backgroundColor: c }} />
                <span className="ml-[5px] whitespace-nowrap">{t}</span>
              </div>
            ))}
          </div>
          <div className="flex w-[15px] flex-col bg-[#f0f0f0]">
            <svg width="15" height="18" viewBox="0 0 15 18" fill="none" stroke="#444" strokeWidth="1.800"><path d="M4 11.500L7.500 8l3.500 3.500" /></svg>
            <div className="h-[518px] bg-[#cdcdcd]" />
          </div>
        </div>
      </section>
      <div className="absolute top-[6px] left-[435px] flex h-[84px] w-[21px] flex-col rounded-r-[2px] bg-[#666]">
        <svg width="20" height="84" viewBox="0 0 20 84" fill="none" stroke="#fff" strokeWidth="1.400">
          <path d="M5 5l10 10M15 5L5 15M9 26H4.500v10h10V31M8 32l7-7M11 24.500h4.500V29M4.500 47h11l-4 5.500v6l-3-2v-4z" />
          <path d="M6 72h8l-4 4z" fill="#fff" stroke="none" />
        </svg>
      </div>
      <button className="absolute top-[513px] left-[671px] flex h-[52px] w-[164px] items-center justify-center border-2 border-black bg-[#333] font-['Noto_Sans',sans-serif] text-[15px] font-bold text-white">Navigation</button>
    </main>
  );
}

const Grid = () => <svg width="11" height="11" viewBox="0 0 11 11" fill="none" stroke="#666" className="mr-[5px] shrink-0"><path d="M.5.500h10v10H.5zM5.500.500v10M.5 5.500h10" /></svg>;
const Book = () => <svg width="12" height="12" viewBox="0 0 12 12" fill="none" stroke="#666" className="mr-[5px] shrink-0"><path d="M6 2C4.500.800 2.500.500.500.500v9.500c2 0 4 .3 5.500 1.500 1.500-1.200 3.500-1.500 5.500-1.500V.500C9.500.500 7.500.800 6 2z" /></svg>;

function Tab({ w, children, on }: Kids & { w: string; on?: boolean }) {
  return <div className={`flex shrink-0 items-center overflow-hidden border-r border-[#c9c9c9] pl-[5px] whitespace-nowrap ${w} ${on ? "bg-[#fbfbfb] font-medium text-[#333]" : ""}`}>{children}</div>;
}

function SheetTabs() {
  return (
    <div className="flex h-[31px] border-t border-b border-[#c9c9c9] bg-[#e6e6e6] font-['Inter',sans-serif] text-[12px] tracking-[-0.12px] text-[#666]">
      <Tab w="w-[131px]">
        <svg width="9" height="12" viewBox="0 0 9 12" fill="none" stroke="#666" className="mr-[5px] ml-[5px]"><path d="M.5 2.500c0-2.500 8-2.500 8 0v7c0 2.500-8 2.500-8 0zM.5 2.500c0 2 8 2 8 0" /></svg>Data Source
      </Tab>
      <div className="flex w-[58px] items-center justify-end overflow-hidden border-r border-[#c9c9c9] pr-[7px] whitespace-nowrap">Top 10 sta...</div>
      <Tab w="w-[200px]">No of Startup by year and applyi...</Tab>
      <Tab w="w-[200px]">Top 10 Industies by No of Startu...</Tab>
      <Tab w="w-[196px]">TOP 10 States by No ofStartups</Tab>
      <Tab w="w-[102px]"><span className="w-[2px]" /><Grid />Dashboard 1</Tab>
      <Tab w="w-[104px]"><span className="w-[2px]" /><Grid />Dashboard 2</Tab>
      <Tab w="w-[104px]" on><span className="w-[2px]" /><Grid />Dashboard 3</Tab>
      <Tab w="w-[104px]"><span className="w-[2px]" /><Grid />Dashboard 4</Tab>
      <Tab w="w-[71px]"><span className="w-[1px]" /><Book />Story 1</Tab>
      <Tab w="w-[32px]"><Icon s={20}><path d="M10 13.500H4.500v-11h11V9M8 11V8M10 11V6M12 9V7" /><path d="M15 11v8M11 15h8" strokeWidth="2" /></Icon></Tab>
      <Tab w="w-[32px]"><Icon s={20}><path d="M10 13.500H4.500v-11h11V9M10 2.500v11M4.500 8h11" /><path d="M15 11v8M11 15h8" strokeWidth="2" /></Icon></Tab>
      <Tab w="w-[32px]"><Icon s={20}><path d="M10 13.500C8 12 6 12 4.500 12V2.500c2 0 4 0 5.500 1.500 1.500-1.500 3.500-1.500 5.500-1.500V9" /><path d="M15 11v8M11 15h8" strokeWidth="2" /></Icon></Tab>
    </div>
  );
}

function StatusBar() {
  return (
    <div className="flex h-[20px] items-center bg-[#ebebeb] font-['Inter',sans-serif] text-[11px] text-[#333]">
      <span className="ml-[3px] w-[65px] tracking-[-0.1px]">36 marks</span>
      <span className="w-[106px] tracking-[-0.15px]">1 row by 1 column</span>
      <span className="grow tracking-[-0.1px]">SUM(Count): 84,621</span>
      <svg width="367" height="20" viewBox="999 708 367 20">
        <path d="M999.500 708v20M1126.500 708v20M1153.500 708v20M1180.500 708v20M1227.500 708v20M1298.500 708v20" stroke="#c9c9c9" />
        <path d="M1242 714v7l-4-3.500zM1236 714h1v7h-1zM1257 714v7l-4-3.500zM1269 714v7l4-3.500zM1283 714v7l4-3.500zM1289 714h1v7h-1z" fill="#555" />
        <path d="M1307 712h3v3h-3zM1311 712h3v3h-3zM1315 712h3v3h-3zM1307 716h3v3h-3zM1311 716h3v3h-3zM1315 716h3v3h-3zM1307 720h3v3h-3zM1311 720h3v3h-3zM1315 720h3v3h-3zM1328 712h11v7h-11zM1328 720h3v3h-3zM1332 720h3v3h-3zM1336 720h3v3h-3z" fill="#bdbdbd" />
        <path d="M1349 712h11v11h-11z" fill="#666" />
      </svg>
    </div>
  );
}

function TaskItem({ children, line, on }: Kids & { line?: boolean; on?: boolean }) {
  return (
    <div className={`flex h-full w-[49px] shrink-0 flex-col items-center ${on ? "bg-[#3c3c3c]" : ""}`}>
      <div className="flex h-[38px] items-center justify-center pt-px"><svg width="28" height="28" viewBox="0 0 28 28">{children}</svg></div>
      {line && <div className={`h-[2px] bg-[#76b9ed] ${on ? "w-full" : "w-[39px]"}`} />}
    </div>
  );
}

function Taskbar() {
  return (
    <div className={`flex h-[40px] bg-[#080808] ${SEGOE}`}>
      <div className="flex w-[48px] items-center justify-center">
        <svg width="16" height="16" viewBox="0 0 16 16" fill="#fff"><path d="M0 2.300l6.800-1v6.300H0zM7.600 1.200L16 0v7.600H7.600zM0 8.400h6.800v6.300L0 13.700zM7.600 8.400H16V16l-8.400-1.200z" /></svg>
      </div>
      <div className="flex w-[344px] items-center bg-[#f2f2f2] pr-[13px] pl-[9px]">
        <svg width="22" height="22" viewBox="0 0 22 22"><circle cx="11" cy="11" r="9" fill="none" stroke="#000" strokeWidth="3" /></svg>
        <span className="ml-[9px] grow text-[15px] tracking-[-0.5px] text-[#333]">Type here to search</span>
        <svg width="14" height="18" viewBox="0 0 14 18" fill="none" stroke="#333" strokeWidth="1.200"><rect x="4.500" y="1" width="5" height="10" rx="1.500" /><path d="M2.500 8v3c0 3 9 3 9 0V8M7 13.500V17M4.500 16.800h5" /></svg>
      </div>
      <TaskItem><g fill="none" stroke="#fff" strokeWidth="1.200"><path d="M6.500 9h10v9h-10zM5.500 5v2h12V5M5.500 22v-2h12v2M20.500 5v5M20.500 15v7" /><path d="M19.500 11h2v2.500h-2z" fill="#fff" /></g></TaskItem>
      <TaskItem><path d="M4 13C4.500 6.500 9 3.500 14 3.500c6.500 0 10 4.500 10 10V16H10.500c.3 3 3 4.800 6.500 4.800 2.300 0 4.300-.6 6-1.600v4.300c-2 1-4.200 1.500-7 1.500C10 25 6 21.500 6 16.500c0-3.200 2-6 5-7.500-4 .5-6 2.500-7 4zM10.700 12.300h7.500c0-2.300-1.200-4-3.500-4s-3.800 1.700-4 4z" fill="#0078d7" /></TaskItem>
      <TaskItem><path d="M9.500 8V3.500h9V8" fill="none" stroke="#ddd" strokeWidth="1.500" /><path d="M3 8h22v17H3z" fill="#f3f3f3" /><path d="M9 12h4.500v4.500H9z" fill="#f25022" /><path d="M14.500 12H19v4.500h-4.500z" fill="#7fba00" /><path d="M9 17.500h4.500V22H9z" fill="#00a4ef" /><path d="M14.500 17.500H19V22h-4.500z" fill="#ffb900" /></TaskItem>
      <TaskItem line><path d="M4 5h9l1 2h10v16H4z" fill="#fbd76f" /><path d="M4 9h20v14H4z" fill="#fde59a" /><path d="M8 23v-9h12v9h-3.500v-4h-5v4z" fill="#38a9dd" /><path d="M5 5h7v1H5z" fill="#e8a31c" /></TaskItem>
      <TaskItem><path d="M2 11L14 3l12 8v14H2z" fill="#0c64a9" /><path d="M5 11h18l-9 9z" fill="#fff" /><path d="M2 11l12 9 12-9v14H2z" fill="#28a8ea" /></TaskItem>
      <TaskItem><path d="M12.500 3h3l5 18h-13z" fill="#f48b1a" /><path d="M11 8.500h6l1.300 4H9.800zM9 16h10l1 3.500H8z" fill="#eee" /><path d="M6 20h16l3 5H3z" fill="#e47a10" /></TaskItem>
      <TaskItem line on><path d="M3 3h22v22H3z" fill="#fff" /><g transform="translate(5 5) scale(1.120)" fill="none" stroke="#4b83a6" strokeWidth="1.200"><path d="M8 5.500v5M5.500 8h5M8 1v3M6.500 2.500h3M8 12v3M6.500 13.500h3M1 8h3M2.500 6.500v3M12 8h3M13.500 6.500v3M4 2.800v3M2.500 4.300h3M12 2.800v3M10.500 4.300h3M4 10.200v3M2.500 11.700h3M12 10.200v3M10.500 11.700h3" /></g></TaskItem>
      <TaskItem line><circle cx="14" cy="14" r="12" fill="#fbc116" /><path d="M3.600 8l6 10 4.400 8A12 12 0 0 1 3.600 8z" fill="#34a853" /><path d="M3.600 8A12 12 0 0 1 24.400 8H14l-4 8z" fill="#ea4335" /><circle cx="14" cy="14" r="5.800" fill="#fff" /><circle cx="14" cy="14" r="4.600" fill="#4285f4" /></TaskItem>
      <TaskItem line><path d="M19.500 2.500L25.500 5v18l-6 2.500L8 15.800 4.500 18.500 2.500 17.500v-7l2-1L8 12.200z" fill="#1f8ad2" /><path d="M19.500 9v10L13 14zM2.500 10.500L6.500 14l-4 3.500z" fill="#080808" /><path d="M19.500 2.500L25.500 5v18l-6 2.500z" fill="#38a5ef" /></TaskItem>
      <TaskItem line><path d="M7 2h16v22H5z" fill="#7fb4e0" /><path d="M7 4h14v17H6z" fill="#e9f1f8" /><text x="7" y="15" fontSize="12" fontWeight="700" fill="#f08c1c" fontFamily="Liberation Serif">A</text><path d="M16 8h5M16 11h5M8 18h12" stroke="#5c89b3" /></TaskItem>
      <TaskItem line><circle cx="14" cy="13" r="10.500" fill="#fff" /><circle cx="14" cy="13" r="9" fill="#25c15c" /><path d="M4 24l2-6 4 4z" fill="#fff" /><path d="M10 8.500c-2 3 3 9 8 9l1.500-2-2.500-1.500-1.500 1.200c-1.500-.7-2.500-2-3-3.200l1-1.200-1-2.500z" fill="#fff" /><circle cx="20" cy="20" r="7.800" fill="#f01818" /><text x="20" y="24.500" textAnchor="middle" fontSize="12" fill="#fff" fontFamily="Open Sans">3</text></TaskItem>
      <div className="ml-auto flex items-center pr-[4px] text-[12px] text-white">
        <svg width="110" height="20" viewBox="1102 738 110 20" fill="none" stroke="#fff" strokeWidth="1.200">
          <circle cx="1114" cy="743.500" r="2.800" /><path d="M1110 750c1-4 8-4 8 1" /><circle cx="1108" cy="748.500" r="2.500" /><path d="M1104 755.500c0-5 8-5 8 0" />
          <path d="M1142 751l5-5 5 5" strokeWidth="1.500" />
          <path d="M1167 754a11 11 0 0 1 11-11M1170 754a8 8 0 0 1 8-7M1173 754a5 5 0 0 1 5-4M1165 751a14 14 0 0 1 10-10" /><circle cx="1177" cy="753.500" r="1" fill="#fff" />
          <path d="M1187.500 745.500h2.500l4-3.500v12l-4-3.500h-2.500zM1196.500 745.500q2 2.500 0 5M1199 743.500q3 4.500 0 9M1201.500 742q4 6 0 12" />
        </svg>
        <span className="ml-px w-[35px] tracking-[-0.4px]">ENG</span>
        <div className="flex w-[60px] flex-col items-center text-[12px] leading-[18px] tracking-[-0.6px]"><span>10:54</span><span>12-04-2023</span></div>
        <svg width="32" height="32" viewBox="0 0 32 32" className="ml-[16px]">
          <path d="M2 6h15v12H9l-4 4v-4H2z" fill="#fff" /><path d="M4.500 9.500h10M4.500 12h10M4.500 14.500h7" stroke="#111" />
          <circle cx="17" cy="21" r="7.500" fill="#333" stroke="#888" /><text x="17" y="25" textAnchor="middle" fontSize="11" fill="#fff" fontFamily="Open Sans">1</text>
        </svg>
        <div className="ml-[5px] h-[40px] w-px bg-[#555]" />
      </div>
    </div>
  );
}

export default function App() {
  return (
    <div className="flex h-[768px] w-[1366px] flex-col overflow-hidden bg-white">
      <TitleBar />
      <MenuBar />
      <Toolbar />
      <div className="flex h-[593px] shrink-0">
        <SidePanel />
        <Dashboard />
        <div className="w-[139px] shrink-0 bg-[#f5f5f5]" />
        <div className="ml-px flex w-[16px] flex-col bg-[#f0f0f0]">
          <svg width="16" height="17" viewBox="0 0 16 17" fill="none" stroke="#444" strokeWidth="1.800"><path d="M4.500 10.500L8 7l3.500 3.500" /></svg>
          <div className="h-[413px] bg-[#cdcdcd]" />
          <svg width="16" height="17" viewBox="0 0 16 17" fill="none" stroke="#444" strokeWidth="1.800" className="mt-auto"><path d="M4.500 6.500L8 10l3.500-3.500" /></svg>
        </div>
      </div>
      <SheetTabs />
      <StatusBar />
      <Taskbar />
    </div>
  );
}
